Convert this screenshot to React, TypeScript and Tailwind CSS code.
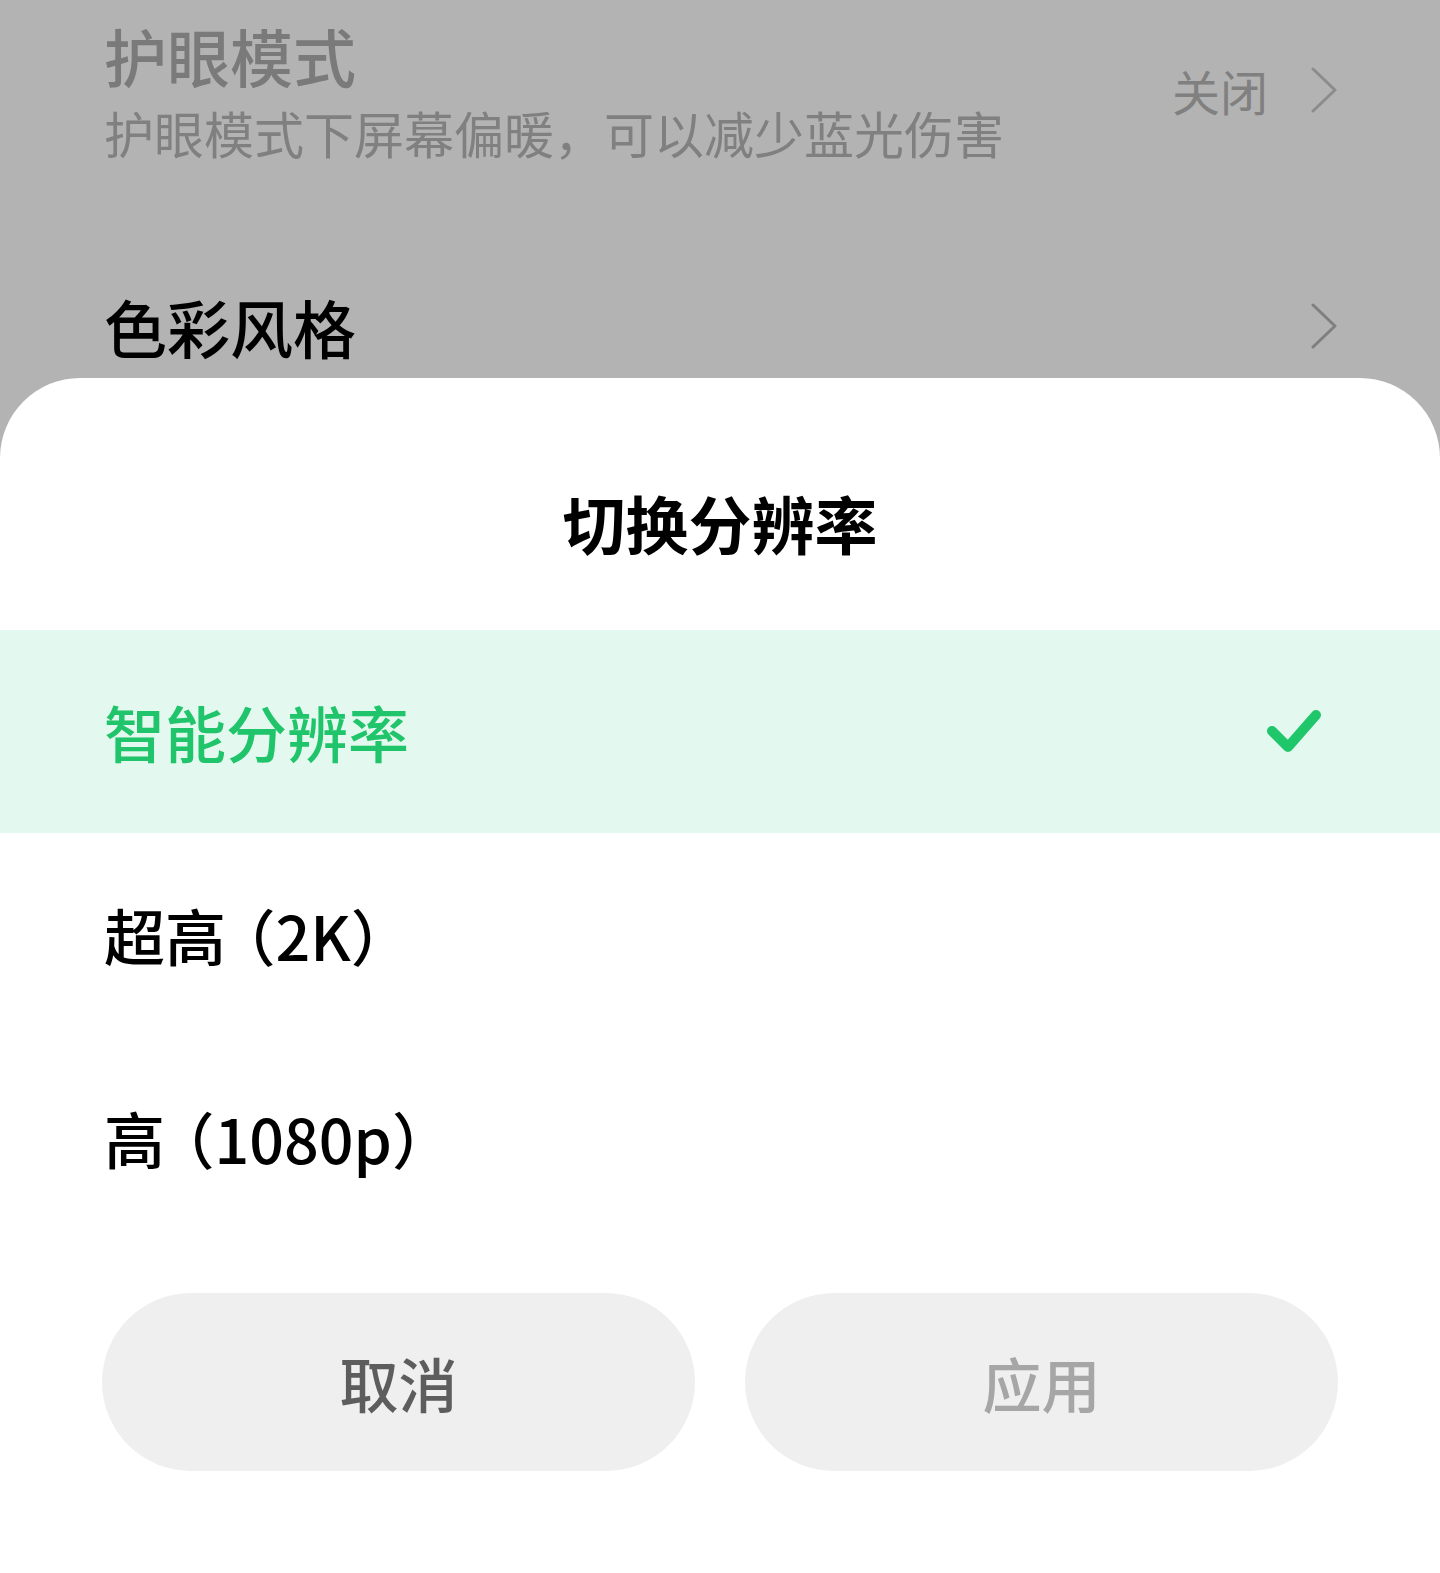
import React from "react";

const font = { fontFamily: '"Noto Sans CJK SC", "Noto Sans", sans-serif' };

function Chevron({ color }: { color: string }) {
  return (
    <svg width="28" height="46" viewBox="0 0 28 46" fill="none">
      <path d="M3 2 L25 23 L3 44" stroke={color} strokeWidth="3" strokeLinecap="round" strokeLinejoin="round" />
    </svg>
  );
}

function Check() {
  return (
    <svg width="56" height="46" viewBox="0 0 56 46" fill="none">
      <path d="M6 22 L22 38 L50 6" stroke="#1fc66a" strokeWidth="10" strokeLinecap="round" strokeLinejoin="round" />
    </svg>
  );
}

export default function App() {
  return (
    <div className="w-[1440px] h-[1573px] bg-[#b3b3b3] flex flex-col overflow-hidden" style={font}>
      {/* background page */}
      <div className="h-[378px] flex flex-col pl-[104px] pr-[102px]">
        <div className="flex items-center justify-between pt-[23px]">
          <div className="flex flex-col">
            <div className="text-[63px] leading-[63px] font-medium text-[#7a7a7a]">护眼模式</div>
            <div className="mt-[21px] text-[50px] leading-[50px] text-[#808080]">护眼模式下屏幕偏暖，可以减少蓝光伤害</div>
          </div>
          <div className="flex items-center gap-[42px]">
            <span className="text-[48px] leading-[48px] text-[#808080]">关闭</span>
            <Chevron color="#8c8c8c" />
          </div>
        </div>
        <div className="flex items-center justify-between mt-[137px]">
          <div className="text-[63px] leading-[63px] font-medium text-black">色彩风格</div>
          <Chevron color="#7f7f7f" />
        </div>
      </div>

      {/* bottom sheet */}
      <div className="flex-1 bg-white rounded-t-[80px] flex flex-col">
        <div className="pt-[112px] text-center text-[63px] leading-[63px] font-bold text-black">切换分辨率</div>
        <div className="mt-[77px] flex flex-col">
          <div className="h-[203px] bg-[#e3f8ee] flex items-center justify-between pl-[104px] pr-[118px]">
            <span className="text-[61px] leading-[61px] font-medium text-[#20c46a]">智能分辨率</span>
            <Check />
          </div>
          <div className="h-[203px] flex items-center pl-[104px]">
            <span className="text-[61px] leading-[61px] font-medium text-black">
              超高<span className="ml-[19px] [font-feature-settings:'halt']">（</span>2K）
            </span>
          </div>
          <div className="h-[203px] flex items-center pl-[104px]">
            <span className="text-[61px] leading-[61px] font-medium text-black">
              高<span className="ml-[19px] [font-feature-settings:'halt']">（</span>1080p）
            </span>
          </div>
        </div>
        <div className="mt-[54px] flex gap-[50px] pl-[102px] pr-[102px]">
          <button className="w-[593px] h-[178px] rounded-full bg-[#efefef] flex items-center justify-center text-[59px] leading-[59px] font-medium text-[#5d5d5d]">
            取消
          </button>
          <button className="w-[593px] h-[178px] rounded-full bg-[#efefef] flex items-center justify-center text-[59px] leading-[59px] font-medium text-[#a6a6a6]">
            应用
          </button>
        </div>
      </div>
    </div>
  );
}
